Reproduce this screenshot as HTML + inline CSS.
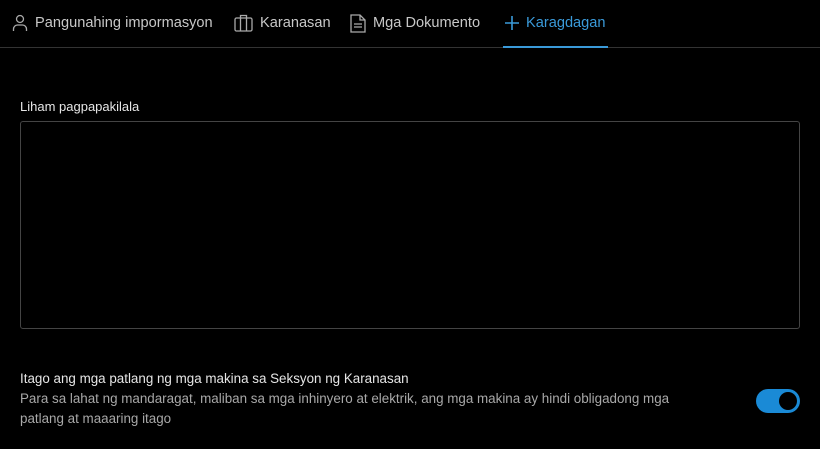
<!DOCTYPE html>
<html><head><meta charset="utf-8"><style>
*{margin:0;padding:0;box-sizing:border-box}
body{width:820px;height:449px;background:#000;color:#ddd;font-family:"Liberation Sans",sans-serif;position:relative;overflow:hidden}
.tabs{position:absolute;top:0;left:0;right:0;height:48px;border-bottom:1px solid #333}
.tab{position:absolute;top:12px;height:22px;font-size:14.6px;color:#c8c8c8;display:flex;align-items:center;gap:7px;line-height:22px}
.tab svg{stroke:#aaa;fill:none;stroke-width:1.3}
.act{color:#3a9ad9}
.act svg{stroke:#3a9ad9}
.ul{position:absolute;left:503px;width:105px;top:46px;height:2px;background:#3a9ad9}
.lbl{position:absolute;left:20px;top:99px;font-size:13px;color:#e6e6e6}
.ta{position:absolute;left:20px;top:121px;width:780px;height:208px;border:1px solid #444;border-radius:3px}
.t1{position:absolute;left:20px;top:371px;font-size:13.4px;color:#e6e6e6}
.t2{position:absolute;left:20px;top:389px;font-size:13.4px;color:#a8a8a8;line-height:20px;width:680px}
.tg{position:absolute;left:756px;top:389px;width:44px;height:24px;border-radius:12px;background:#1a8ad6}
.tg:after{content:"";position:absolute;right:3px;top:3px;width:18px;height:18px;border-radius:50%;background:#000}
</style></head><body>
<div class="tabs">
<div class="tab" style="left:12px"><svg width="16" height="18" viewBox="0 0 16 18"><circle cx="8" cy="5" r="3.5"/><path d="M1.5 17v-2a4 4 0 0 1 4-4h5a4 4 0 0 1 4 4v2"/></svg>Pangunahing impormasyon</div>
<div class="tab" style="left:234px"><svg width="19" height="18" viewBox="0 0 19 18"><rect x="1" y="4" width="17" height="13" rx="1.5"/><path d="M6.5 4V1.5h6V4M6.5 4v13M12.5 4v13"/></svg>Karanasan</div>
<div class="tab" style="left:350px"><svg width="16" height="19" viewBox="0 0 16 19"><path d="M1 1h9l5 5v12H1z M10 1v5h5 M4 10h8 M4 13h8"/></svg>Mga Dokumento</div>
<div class="tab act" style="left:505px"><svg width="14" height="14" viewBox="0 0 14 14" style="stroke-width:1.6"><path d="M7 0v14M0 7h14"/></svg>Karagdagan</div>
</div>
<div class="ul"></div>
<div class="lbl">Liham pagpapakilala</div>
<div class="ta"></div>
<div class="t1">Itago ang mga patlang ng mga makina sa Seksyon ng Karanasan</div>
<div class="t2">Para sa lahat ng mandaragat, maliban sa mga inhinyero at elektrik, ang mga makina ay hindi obligadong mga patlang at maaaring itago</div>
<div class="tg"></div>
</body></html>
